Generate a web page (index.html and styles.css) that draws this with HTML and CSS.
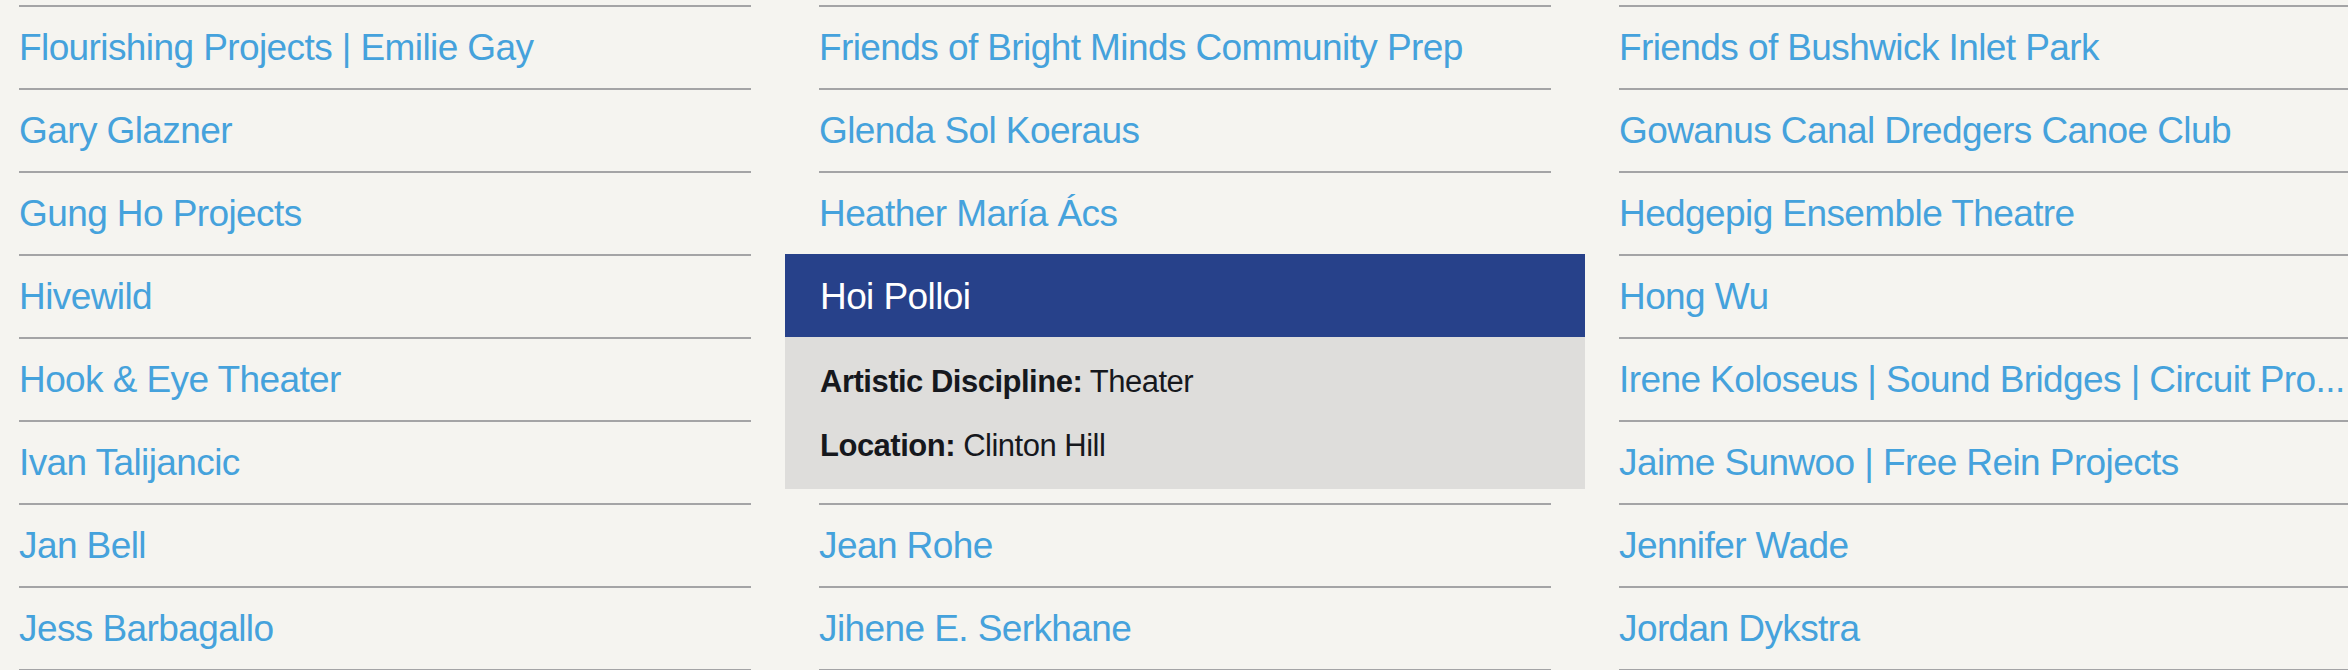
FILE: index.html
```html
<!DOCTYPE html>
<html lang="en">
<head>
<meta charset="utf-8">
<title>Directory</title>
<link rel="stylesheet" href="styles.css">
</head>
<body>
<div class="directory">
  <ul class="col">
    <li class="row"><a class="name" href="#">Flourishing Projects | Emilie Gay</a></li>
    <li class="row"><a class="name" href="#">Gary Glazner</a></li>
    <li class="row"><a class="name" href="#">Gung Ho Projects</a></li>
    <li class="row"><a class="name" href="#">Hivewild</a></li>
    <li class="row"><a class="name" href="#">Hook &amp; Eye Theater</a></li>
    <li class="row"><a class="name" href="#">Ivan Talijancic</a></li>
    <li class="row"><a class="name" href="#">Jan Bell</a></li>
    <li class="row"><a class="name" href="#">Jess Barbagallo</a></li>
  </ul>
  <ul class="col">
    <li class="row"><a class="name" href="#">Friends of Bright Minds Community Prep</a></li>
    <li class="row"><a class="name" href="#">Glenda Sol Koeraus</a></li>
    <li class="row"><a class="name" href="#">Heather María Ács</a></li>
    <li class="row open">
      <a class="name head" href="#">Hoi Polloi</a>
      <div class="details">
        <p class="detail"><strong>Artistic Discipline:</strong> Theater</p>
        <p class="detail"><strong>Location:</strong> Clinton Hill</p>
      </div>
    </li>
    <li class="row"><a class="name" href="#">Jean Rohe</a></li>
    <li class="row"><a class="name" href="#">Jihene E. Serkhane</a></li>
  </ul>
  <ul class="col">
    <li class="row"><a class="name" href="#">Friends of Bushwick Inlet Park</a></li>
    <li class="row"><a class="name" href="#">Gowanus Canal Dredgers Canoe Club</a></li>
    <li class="row"><a class="name" href="#">Hedgepig Ensemble Theatre</a></li>
    <li class="row"><a class="name" href="#">Hong Wu</a></li>
    <li class="row"><a class="name" href="#">Irene Koloseus | Sound Bridges | Circuit Pro...</a></li>
    <li class="row"><a class="name" href="#">Jaime Sunwoo | Free Rein Projects</a></li>
    <li class="row"><a class="name" href="#">Jennifer Wade</a></li>
    <li class="row"><a class="name" href="#">Jordan Dykstra</a></li>
  </ul>
</div>
</body>
</html>
```
FILE: styles.css
```css
html {
  overflow: hidden;
  background: #f5f4f0;
}
body {
  margin: 0;
  padding: 5px 0 0 19px;
  font-family: "Liberation Sans", Arial, sans-serif;
  background: #f5f4f0;
  overflow: hidden;
  width: 2400px;
}
.directory {
  display: grid;
  grid-template-columns: repeat(3, 732px);
  column-gap: 68px;
  align-items: start;
}
.col {
  list-style: none;
  margin: 0;
  padding: 0;
  border-bottom: 2px solid #a4a4a6;
}
.row {
  border-top: 2px solid #a4a4a6;
  height: 81px;
}
.name {
  display: block;
  padding-top: 1px;
  height: 80px;
  line-height: 80px;
  font-size: 37px;
  letter-spacing: -0.016em;
  color: #45a2dc;
  text-decoration: none;
  white-space: nowrap;
  overflow: hidden;
}
.row.open {
  border-top: 0;
  height: auto;
  margin: 0 -34px 14px;
}
.name.head {
  background: #27418a;
  color: #ffffff;
  padding: 3px 35px 0;
  height: 80px;
}
.details {
  background: #dedddb;
  padding: 13px 35px 11px;
}
.detail {
  margin: 0;
  font-size: 31px;
  line-height: 64px;
  letter-spacing: -0.016em;
  color: #16181d;
}
.detail strong {
  font-weight: 700;
}
```
